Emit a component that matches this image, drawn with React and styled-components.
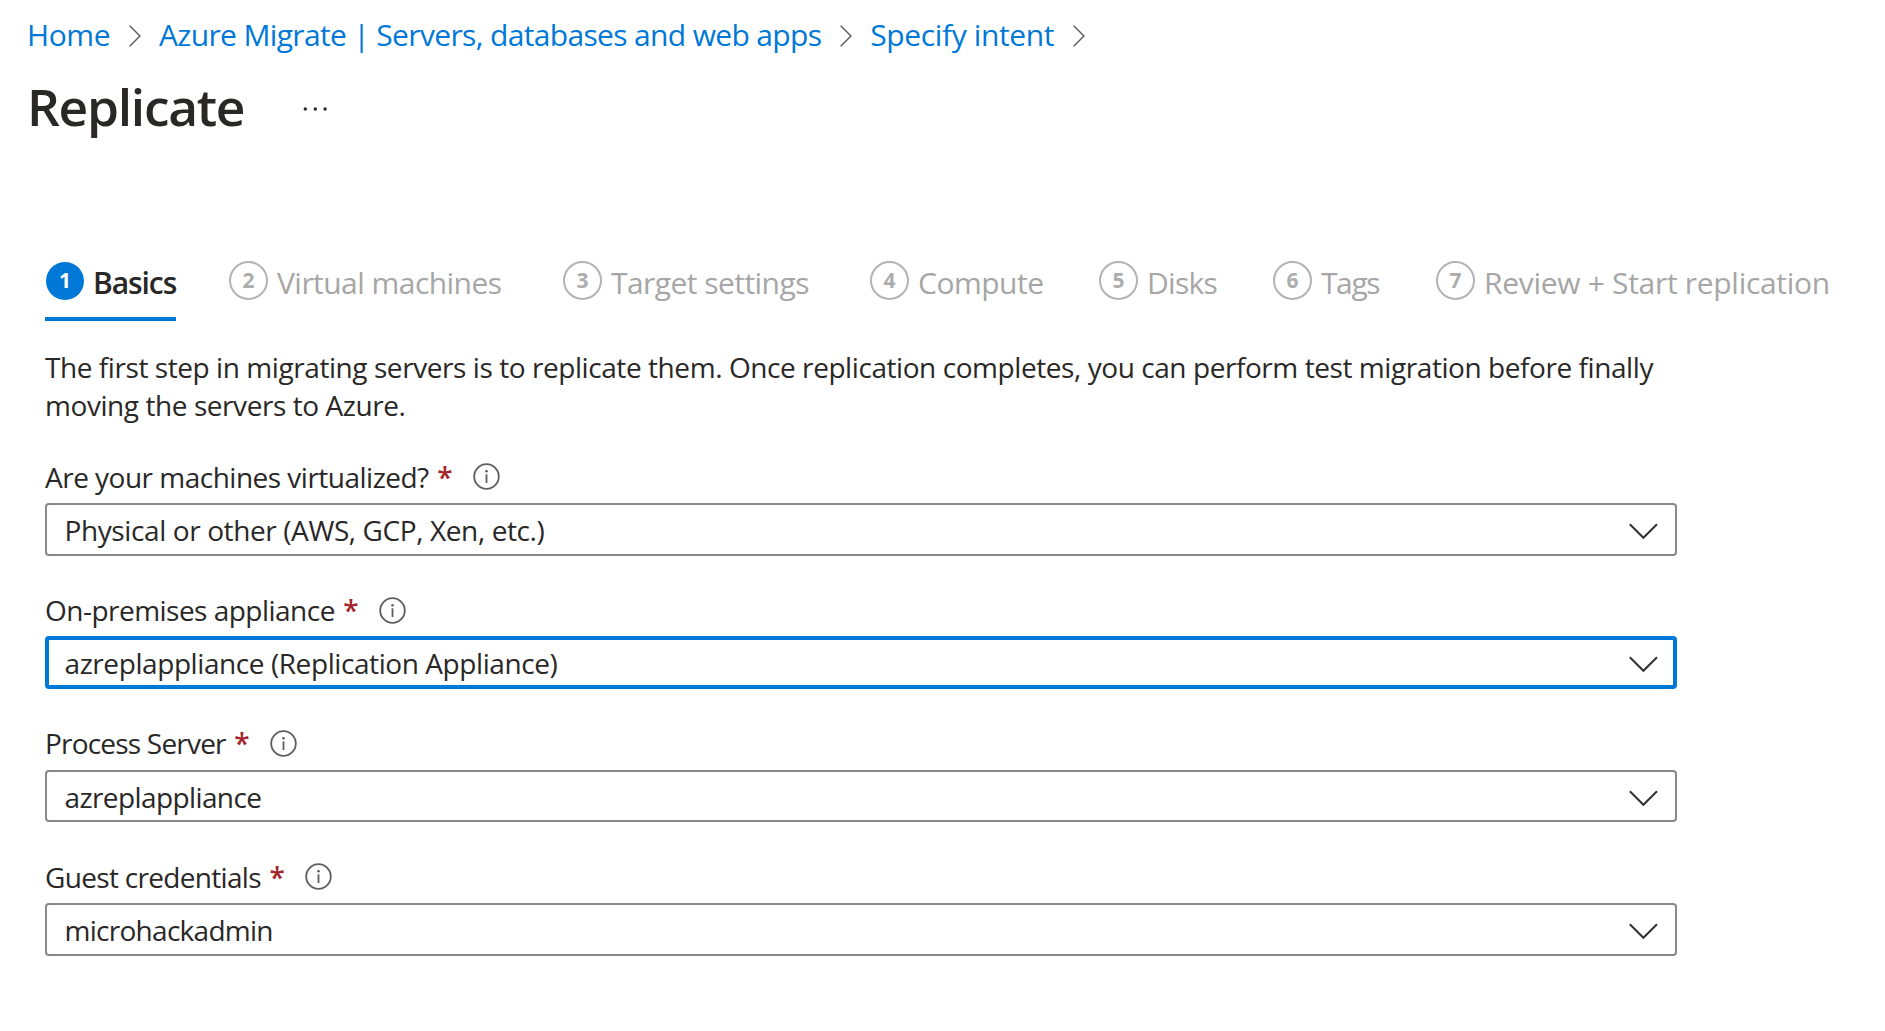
import React from 'react';
import styled, { createGlobalStyle, css } from 'styled-components';

const GlobalStyle = createGlobalStyle`
  *, *::before, *::after { box-sizing: border-box; }
  body {
    margin: 0;
    background: #fff;
    color: #292827;
    font-family: "Open Sans", "Noto Sans", sans-serif;
  }
`;

const Page = styled.main`
  min-height: 1031px;
  padding: 15px 27px 0;
  background: #fff;
`;

const Breadcrumb = styled.nav`
  display: flex;
  align-items: center;
  gap: 18.4px;
  height: 40px;
`;

const Crumb = styled.a`
  color: #0078d7;
  font-size: 30px;
  line-height: 40px;
  letter-spacing: ${(p) => p.$track}px;
  white-space: nowrap;
  text-decoration: none;
`;

const CrumbArrow = styled.svg`
  flex: none;
  width: 12px;
  height: 22px;
  margin-top: 2px;
`;

const Header = styled.header`
  display: flex;
  align-items: center;
  gap: 59px;
  height: 70px;
  margin-top: 16px;
`;

const Title = styled.h1`
  margin: 0;
  font-size: 51.5px;
  font-weight: 600;
  line-height: 70px;
  letter-spacing: -1.29px;
`;

const More = styled.svg`
  width: 24px;
  height: 6px;
  margin-top: 6px;
`;

const Wizard = styled.section`
  margin-left: 18px;
`;

const Tabs = styled.div`
  display: grid;
  grid-template-columns: 184px 334px 307px 229px 174px 163px auto;
  justify-items: start;
  margin-top: 120px;
  height: 60px;
`;

const Tab = styled.div`
  display: flex;
  align-items: flex-start;
  gap: 9px;
  height: 60px;
  color: #a6a6a6;
  white-space: nowrap;
  ${(p) =>
    p.$active &&
    css`
      color: #292827;
      font-weight: 600;
      border-bottom: 4px solid #0078d7;
    `}
`;

const Step = styled.span`
  display: flex;
  align-items: center;
  justify-content: center;
  flex: none;
  width: 39px;
  height: 39px;
  padding-bottom: 1px;
  border: 2px solid #b3b3b3;
  border-radius: 50%;
  color: #adadad;
  font-size: 21px;
  font-weight: 700;
  line-height: 1;
  ${(p) =>
    p.$active &&
    css`
      width: 38px;
      height: 38px;
      margin: 1px 0 0 1px;
      border: 0;
      background: #0078d7;
      color: #fff;
    `}
`;

const TabLabel = styled.span`
  margin-top: 2px;
  font-size: 30px;
  line-height: 40px;
  letter-spacing: ${(p) => p.$track}px;
`;

const Intro = styled.p`
  margin: 27px 0 0;
  font-size: 28px;
  line-height: 38px;
  letter-spacing: -0.43px;
  white-space: nowrap;
`;

const Form = styled.form`
  display: flex;
  flex-direction: column;
  gap: 36.33px;
  width: 1632px;
  margin-top: 34.75px;
`;

const Field = styled.div`
  display: flex;
  flex-direction: column;
  gap: 8.3px;
`;

const LabelRow = styled.div`
  display: flex;
  align-items: center;
  height: 36px;
`;

const Label = styled.label`
  font-size: 28px;
  line-height: 36px;
  letter-spacing: ${(p) => p.$track}px;
  white-space: nowrap;
`;

const Required = styled.span`
  margin-left: 8.5px;
  color: #a4262c;
  font-size: 28px;
  font-weight: 600;
  line-height: 36px;
`;

const Info = styled.svg`
  width: 27px;
  height: 27px;
  margin-left: 20.5px;
`;

const Select = styled.div`
  display: flex;
  align-items: center;
  justify-content: space-between;
  height: 52.7px;
  padding: 0 17.5px 0 17.5px;
  border: 2px solid #8a8886;
  border-radius: 4px;
  ${(p) =>
    p.$focused &&
    css`
      padding: 0 15.5px 0 15.5px;
      border: 4px solid #0078d7;
    `}
`;

const Value = styled.span`
  padding-top: 1px;
  font-size: 28px;
  line-height: 38px;
  letter-spacing: ${(p) => p.$track}px;
`;

const Chevron = styled.svg`
  flex: none;
  width: 29px;
  height: 17px;
  margin-top: 4px;
`;

const crumbs = [
  { text: 'Home', track: -0.4 },
  { text: 'Azure Migrate | Servers, databases and web apps', track: -0.65 },
  { text: 'Specify intent', track: -0.37 },
];

const steps = [
  { text: 'Basics', track: -1.07 },
  { text: 'Virtual machines', track: -0.54 },
  { text: 'Target settings', track: -0.55 },
  { text: 'Compute', track: -0.5 },
  { text: 'Disks', track: -0.7 },
  { text: 'Tags', track: -1.4 },
  { text: 'Review + Start replication', track: -0.3 },
];

const fields = [
  { label: 'Are your machines virtualized?', labelTrack: -0.51, value: 'Physical or other (AWS, GCP, Xen, etc.)', valueTrack: -0.39 },
  { label: 'On-premises appliance', labelTrack: -0.52, value: 'azreplappliance (Replication Appliance)', valueTrack: -0.42, focused: true },
  { label: 'Process Server', labelTrack: -0.8, value: 'azreplappliance', valueTrack: -0.6 },
  { label: 'Guest credentials', labelTrack: -0.68, value: 'microhackadmin', valueTrack: -0.72 },
];

export default function App() {
  return (
    <>
      <GlobalStyle />
      <Page>
        <Breadcrumb>
          {crumbs.map((c) => (
            <React.Fragment key={c.text}>
              <Crumb $track={c.track}>{c.text}</Crumb>
              <CrumbArrow viewBox="0 0 12 22" fill="none" stroke="#605e5c" strokeWidth="1.5">
                <path d="M0.7 0.7 L11 11 L0.7 21.3" />
              </CrumbArrow>
            </React.Fragment>
          ))}
        </Breadcrumb>

        <Header>
          <Title>Replicate</Title>
          <More viewBox="0 0 24 6" fill="#292827">
            <circle cx="2.3" cy="3" r="1.7" />
            <circle cx="12.3" cy="3" r="1.7" />
            <circle cx="22.1" cy="3" r="1.7" />
          </More>
        </Header>

        <Wizard>
          <Tabs>
            {steps.map((s, i) => (
              <Tab key={s.text} $active={i === 0}>
                <Step $active={i === 0}>{i + 1}</Step>
                <TabLabel $track={s.track}>{s.text}</TabLabel>
              </Tab>
            ))}
          </Tabs>

          <Intro>
            The first step in migrating servers is to replicate them. Once replication completes, you can perform test migration before finally
            <br />
            moving the servers to Azure.
          </Intro>

          <Form>
            {fields.map((f) => (
              <Field key={f.label}>
                <LabelRow>
                  <Label $track={f.labelTrack}>{f.label}</Label>
                  <Required>*</Required>
                  <Info viewBox="0 0 27 27" fill="none" stroke="#605e5c" strokeWidth="1.8">
                    <circle cx="13.5" cy="13.5" r="12.3" />
                    <path d="M13.5 11.3 V20" />
                    <circle cx="13.5" cy="8.2" r="1.3" fill="#605e5c" stroke="none" />
                  </Info>
                </LabelRow>
                <Select $focused={f.focused} role="combobox" aria-label={f.label}>
                  <Value $track={f.valueTrack}>{f.value}</Value>
                  <Chevron viewBox="0 0 29 17" fill="none" stroke="#323130" strokeWidth="2">
                    <path d="M0.8 1.2 L14.4 14.8 L28 1.2" />
                  </Chevron>
                </Select>
              </Field>
            ))}
          </Form>
        </Wizard>
      </Page>
    </>
  );
}
